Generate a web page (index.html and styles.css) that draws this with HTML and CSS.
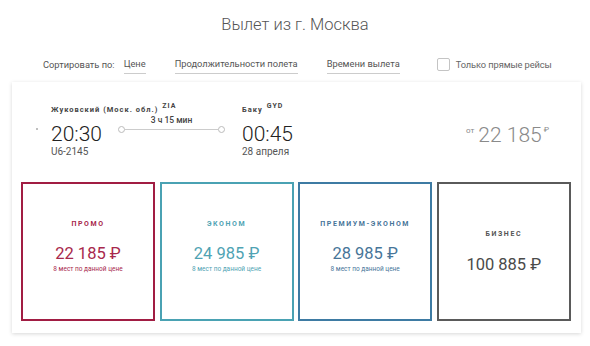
FILE: index.html
```html
<!DOCTYPE html>
<html lang="ru">
<head>
<meta charset="utf-8">
<link rel="stylesheet" href="styles.css">
</head>
<body>
<div class="page">
  <h1 class="title">Вылет из г. Москва</h1>
  <div class="sort">
    <span class="sort-label">Сортировать по:</span>
    <a class="sort-link s1">Цене</a>
    <a class="sort-link s2">Продолжительности полета</a>
    <a class="sort-link s3">Времени вылета</a>
    <label class="direct"><span class="check"></span>Только прямые рейсы</label>
  </div>
  <div class="card">
    <div class="flight">
      <span class="dot"></span>
      <div class="point p1">
        <div class="city">Жуковский (Моск. обл.)<sup>ZIA</sup></div>
        <div class="time">20:30</div>
        <div class="sub">U6-2145</div>
      </div>
      <div class="route">
        <div class="dur">3 ч 15 мин</div>
        <div class="line"><span class="end"></span><span class="bar"></span><span class="end"></span></div>
      </div>
      <div class="point p2">
        <div class="city">Баку<sup>GYD</sup></div>
        <div class="time">00:45</div>
        <div class="sub">28 апреля</div>
      </div>
      <div class="from"><span class="ot">от</span><span class="amount">22 185</span><span class="rub">₽</span></div>
    </div>
    <div class="fares">
      <div class="fare promo">
        <div class="fare-name">Промо</div>
        <div class="fare-price">22 185 ₽</div>
        <div class="fare-seats">8 мест по данной цене</div>
      </div>
      <div class="fare econom">
        <div class="fare-name">Эконом</div>
        <div class="fare-price">24 985 ₽</div>
        <div class="fare-seats">8 мест по данной цене</div>
      </div>
      <div class="fare premium">
        <div class="fare-name">Премиум-эконом</div>
        <div class="fare-price">28 985 ₽</div>
        <div class="fare-seats">8 мест по данной цене</div>
      </div>
      <div class="fare business">
        <div class="fare-name">Бизнес</div>
        <div class="fare-price">100 885 ₽</div>
      </div>
    </div>
  </div>
</div>
</body>
</html>
```

FILE: styles.css
```css
* { box-sizing: border-box; }
html, body { margin: 0; padding: 0; background: #fff; }
body {
  font-family: Roboto, "Liberation Sans", sans-serif;
  color: #555;
  width: 590px;
  height: 346px;
  overflow: hidden;
}
.page {
  padding: 14px 9px 0 12px;
}
.title {
  margin: 0 0 0 -12px;
  width: 590px;
  text-align: center;
  font-size: 16.5px;
  font-weight: 300;
  line-height: 22px;
  color: #555;
}
.sort {
  display: flex;
  align-items: center;
  white-space: nowrap;
  height: 20px;
  margin-top: 18px;
  padding-left: 31px;
  font-size: 9.3px;
  color: #555;
}
.sort-link {
  border-bottom: 1px solid #ccc;
  padding-bottom: 3px;
  margin-top: 4px;
  line-height: 12px;
}
.sort-label { margin-right: 9px; }
.s1 { margin-right: 29px; }
.s2 { margin-right: 29px; }
.s3 { margin-right: 37px; }
.direct {
  display: flex;
  align-items: center;
  color: #666;
  letter-spacing: -0.1px;
}
.check {
  width: 13px;
  height: 13px;
  border: 1px solid #c4c4c4;
  border-radius: 2px;
  margin-right: 6px;
}
.card {
  margin-top: 8px;
  width: 569px;
  height: 251px;
  background: #fff;
  box-shadow: 0 1px 4px rgba(0, 0, 0, 0.16);
  padding: 0 10px 12px 9px;
}
.flight {
  display: flex;
  align-items: flex-start;
  height: 100px;
  padding-top: 19px;
}
.dot {
  width: 2px;
  height: 2px;
  border-radius: 50%;
  background: #aaa;
  margin: 27px 13px 0 15px;
}
.point { white-space: nowrap; }
.p1 { width: 67px; }
.p2 { margin-left: 17px; }
.city {
  font-size: 7.5px;
  font-weight: 700;
  letter-spacing: 1px;
  line-height: 10px;
  color: #444;
}
.city sup {
  font-size: 7px;
  vertical-align: 4px;
  margin-left: 4px;
}
.time {
  margin-top: 7px;
  font-size: 21px;
  line-height: 24px;
  font-weight: 300;
  color: #222;
}
.sub {
  margin-top: 0;
  font-size: 10px;
  line-height: 12px;
  color: #555;
}
.route {
  width: 107px;
  margin-top: 14px;
}
.dur {
  text-align: center;
  font-size: 8.5px;
  font-weight: 500;
  line-height: 11px;
  color: #444;
}
.line {
  display: flex;
  align-items: center;
  height: 6px;
}
.end {
  width: 7px;
  height: 7px;
  border: 1px solid #bbb;
  border-radius: 50%;
  flex: none;
}
.bar {
  flex: 1;
  height: 1px;
  background: #ccc;
}
.from {
  margin-left: auto;
  margin-right: 22px;
  margin-top: 22px;
  display: flex;
  align-items: flex-start;
  color: #8a8a8a;
}
.ot {
  font-size: 8px;
  line-height: 10px;
  margin-top: 3px;
  margin-right: 4px;
}
.amount {
  font-size: 21px;
  line-height: 24px;
  font-weight: 300;
}
.rub {
  font-size: 8px;
  line-height: 10px;
  margin-top: 2px;
  margin-left: 2px;
}
.fares {
  display: grid;
  grid-template-columns: repeat(4, 134px);
  column-gap: 4.6px;
}
.fare {
  height: 139px;
  border: 2px solid #555;
  display: flex;
  flex-direction: column;
  align-items: center;
  justify-content: center;
  text-align: center;
}
.fare-name {
  font-size: 7px;
  font-weight: 700;
  letter-spacing: 1.6px;
  line-height: 10px;
  text-transform: uppercase;
}
.fare-price {
  margin-top: 15px;
  font-size: 16.5px;
  line-height: 20px;
  font-weight: 400;
}
.fare-seats {
  margin-top: 1px;
  margin-bottom: 10px;
  font-size: 6.5px;
  line-height: 9px;
}
.promo { border-color: #a11d43; color: #a8284c; }
.econom { border-color: #4aa2b3; color: #4fa3b3; }
.premium { border-color: #3e7ba3; color: #477599; }
.business { border-color: #5a5a5a; color: #4a4a4a; }
.business .fare-name { color: #555; }
.business .fare-price { margin-top: 16px; }
```
